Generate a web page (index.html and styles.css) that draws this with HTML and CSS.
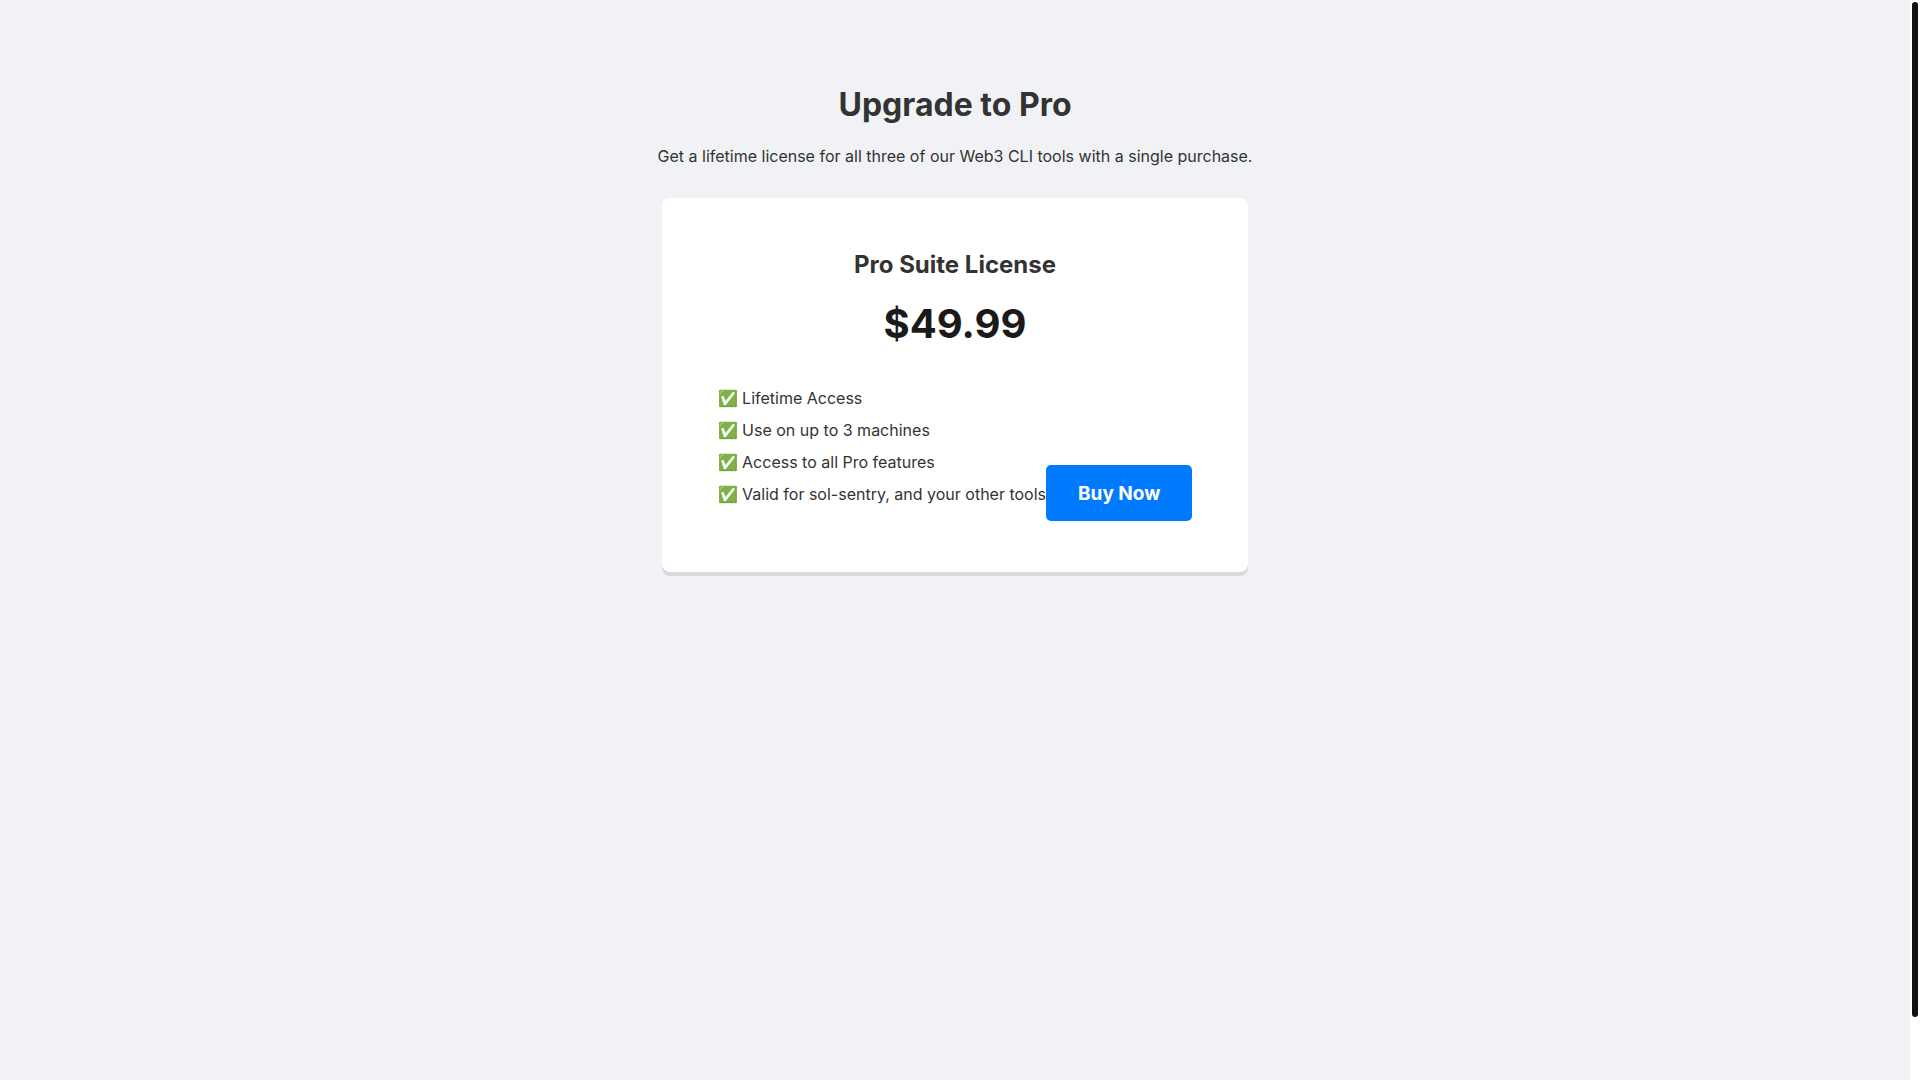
FILE: index.html
```html
<!DOCTYPE html>
<html lang="en">
<head>
<meta charset="utf-8">
<title>Upgrade to Pro</title>
<link rel="stylesheet" href="styles.css">
</head>
<body>
<div class="scroller">
  <main class="page">
    <div class="container">
      <h1 class="title">Upgrade to Pro</h1>
      <p class="intro">Get a lifetime license for all three of our Web3 CLI tools with a single purchase.</p>
      <section class="card">
        <h2 class="product">Pro Suite License</h2>
        <p class="price">$49.99</p>
        <div class="offer">
          <ul class="features">
            <li>✅ Lifetime Access</li>
            <li>✅ Use on up to 3 machines</li>
            <li>✅ Access to all Pro features</li>
            <li>✅ Valid for sol-sentry, and your other tools</li>
          </ul>
          <button class="buy" type="button">Buy Now</button>
        </div>
      </section>
    </div>
  </main>
  <div class="scrollbar"><div class="thumb"></div></div>
</div>
</body>
</html>
```
FILE: styles.css
```css
* { box-sizing: border-box; }
body {
  margin: 0;
  font-family: Inter, sans-serif;
  font-size: 16px;
  line-height: 26px;
  color: #333;
  background: #f0f2f5;
}
.scroller { display: flex; min-height: 100vh; }
.page { flex: 1; display: flex; justify-content: center; align-items: flex-start; padding: 80px 20px; }
.container { text-align: center; }
.title { margin: 0; font-size: 32px; line-height: 50px; font-weight: 700; }
.intro { margin: 13px 0 29px; }
.card { margin: 0 4px; background: #fff; border-radius: 8px; padding: 48px 48px 51px; box-shadow: 0 4px 0 #d7d9dc; }
.product { margin: 0; font-size: 24px; line-height: 38px; }
.price { margin: 8px 0 26px; font-size: 40px; line-height: 64px; font-weight: 700; color: #1a1a1a; }
.offer { display: flex; align-items: flex-end; justify-content: center; }
.features { list-style: none; margin: 0; padding: 0 0 11px; text-align: left; line-height: 32px; white-space: nowrap; }
.buy { border: 0; border-radius: 5px; padding: 16px 32px 14px; font: 700 19px/26px Inter, sans-serif; color: #fff; background: #007bff; white-space: nowrap; }
.scrollbar { width: 10px; padding: 2px; background: #fff; }
.thumb { height: 94vh; border-radius: 3px; background: #111; }
```
